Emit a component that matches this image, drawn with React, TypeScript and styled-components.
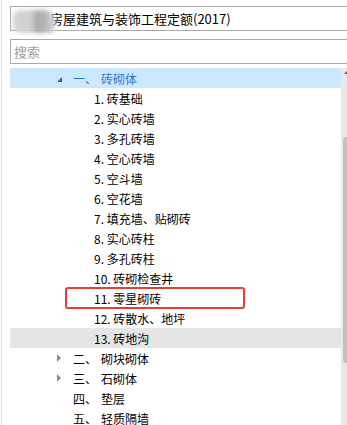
import React from 'react';
import styled, {createGlobalStyle} from 'styled-components';

const GlobalStyle = createGlobalStyle`
  html, body {
    margin: 0;
    padding: 0;
    background: #ffffff;
  }
  body {
    font-family: "Noto Sans CJK SC", "Noto Sans", sans-serif;
  }
`;

type Item = {label: string; name: string; level: 0 | 1; expand?: 'open' | 'closed'; state?: 'selected' | 'hover'; marked?: boolean};

const Items: Item[] = [
    {label: '一、', name: '砖砌体', level: 0, expand: 'open', state: 'selected'},
    {label: '1.', name: '砖基础', level: 1},
    {label: '2.', name: '实心砖墙', level: 1},
    {label: '3.', name: '多孔砖墙', level: 1},
    {label: '4.', name: '空心砖墙', level: 1},
    {label: '5.', name: '空斗墙', level: 1},
    {label: '6.', name: '空花墙', level: 1},
    {label: '7.', name: '填充墙、贴砌砖', level: 1},
    {label: '8.', name: '实心砖柱', level: 1},
    {label: '9.', name: '多孔砖柱', level: 1},
    {label: '10.', name: '砖砌检查井', level: 1},
    {label: '11.', name: '零星砌砖', level: 1, marked: true},
    {label: '12.', name: '砖散水、地坪', level: 1},
    {label: '13.', name: '砖地沟', level: 1, state: 'hover'},
    {label: '二、', name: '砌块砌体', level: 0, expand: 'closed'},
    {label: '三、', name: '石砌体', level: 0, expand: 'closed'},
    {label: '四、', name: '垫层', level: 0},
    {label: '五、', name: '轻质隔墙', level: 0},
];

const Page = styled.div`
  height: 425px;
  margin-left: 1px;
  border-left: 1px solid #dcdcdc;
  padding: 6px 0 0 8px;
  box-sizing: border-box;
  overflow: hidden;
  display: flex;
  flex-direction: column;
`;

const Field = styled.div`
  position: relative;
  height: 25px;
  width: 345px;
  box-sizing: border-box;
  border: 1px solid #a9a9a9;
  display: flex;
  align-items: center;
  padding-left: 3px;
  font-size: 13px;
  color: #000;
  flex-shrink: 0;
`;

const SearchField = styled(Field)`
  margin-top: 8px;
  color: #a0a0a0;
`;

const Blur = styled.div`
  position: absolute;
  left: 2px;
  top: 3px;
  width: 42px;
  height: 23px;
  background: linear-gradient(90deg, #d6d6d6 0%, #cfcfcf 45%, #a9a9a9 55%, #b9b9b9 80%, #e0e0e0 100%);
  filter: blur(2px);
  border-radius: 6px 10px 4px 8px;
`;

const Hidden = styled.span`
  width: 36px;
  flex-shrink: 0;
`;

const Caret = styled.div`
  position: absolute;
  right: 3px;
  top: 10px;
  width: 0;
  height: 0;
  border-left: 4px solid transparent;
  border-top: 4px solid #555;
`;

const Tree = styled.div`
  margin-top: 4px;
  display: flex;
  flex: 1;
  min-height: 0;
`;

const List = styled.div`
  width: 331px;
  flex-shrink: 0;
`;

const Row = styled.div<{$state?: 'selected' | 'hover'}>`
  position: relative;
  height: 20px;
  display: flex;
  align-items: center;
  font-size: 12px;
  color: ${p => (p.$state === 'selected' ? '#2f74d0' : '#000')};
  background: ${p => (p.$state === 'selected' ? '#cce8ff' : p.$state === 'hover' ? '#e5e5e5' : 'transparent')};
`;

const Toggle = styled.span`
  width: 63px;
  flex-shrink: 0;
  display: flex;
  justify-content: flex-end;
  padding-right: 11px;
  box-sizing: border-box;
`;

const Open = styled.span`
  width: 0;
  height: 0;
  border-left: 5px solid transparent;
  border-bottom: 5px solid #595959;
  margin-top: 2px;
`;

const Closed = styled.span`
  width: 0;
  height: 0;
  border-top: 4px solid transparent;
  border-bottom: 4px solid transparent;
  border-left: 4px solid #8c8c8c;
  margin-right: 1px;
`;

const Label = styled.span`
  width: 28px;
  flex-shrink: 0;
`;

const Child = styled.span`
  padding-left: 84px;
  white-space: pre;
`;

const Mark = styled.div`
  position: absolute;
  left: 55px;
  top: -1px;
  width: 180px;
  height: 22px;
  box-sizing: border-box;
  border: 2px solid #ea3b35;
  border-radius: 3px;
`;

const Scroll = styled.div`
  width: 17px;
  background: #e8e8e8;
  position: relative;
  flex-shrink: 0;
`;

const UpArrow = styled.div`
  position: absolute;
  left: 3px;
  top: 3px;
  width: 0;
  height: 0;
  border-left: 3px solid transparent;
  border-right: 3px solid transparent;
  border-bottom: 3px solid #606060;
`;

const Thumb = styled.div`
  position: absolute;
  left: 2px;
  top: 69px;
  width: 8px;
  height: 226px;
  background: #c2c2c2;
  border-radius: 4px;
`;

const App = () => (
    <>
        <GlobalStyle />
        <Page>
            <Field>
                <Blur />
                <Hidden />
                房屋建筑与装饰工程定额(2017)
                <Caret />
            </Field>
            <SearchField>搜索</SearchField>
            <Tree>
                <List>
                    {Items.map(item => (
                        <Row key={item.label} $state={item.state}>
                            {item.level === 0 ? (
                                <>
                                    <Toggle>
                                        {item.expand === 'open' && <Open />}
                                        {item.expand === 'closed' && <Closed />}
                                    </Toggle>
                                    <Label>{item.label}</Label>
                                    {item.name}
                                </>
                            ) : (
                                <Child>{item.label} {item.name}</Child>
                            )}
                            {item.marked && <Mark />}
                        </Row>
                    ))}
                </List>
                <Scroll>
                    <UpArrow />
                    <Thumb />
                </Scroll>
            </Tree>
        </Page>
    </>
);

export default App;
